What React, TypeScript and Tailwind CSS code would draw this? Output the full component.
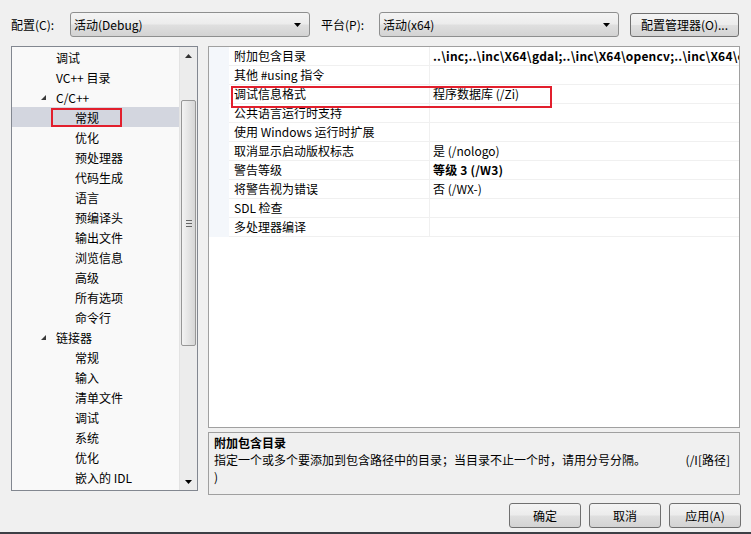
import React from "react";

const btnBg =
  "bg-[linear-gradient(to_bottom,#f4f4f4_0%,#ececec_48%,#dfdfdf_52%,#d3d3d3_100%)]";

function DownTri({ className = "" }: { className?: string }) {
  return (
    <svg width="7" height="4" viewBox="0 0 7 4" className={className}>
      <polygon points="0,0 7,0 3.5,4" fill="#000" />
    </svg>
  );
}

function Combo({ text, w }: { text: string; w: string }) {
  return (
    <div
      className={`${w} h-[25px] rounded-[3px] border border-[#8e8f8f] ${btnBg} flex items-center pl-[3px] pr-[8px] justify-between`}
    >
      <span>{text}</span>
      <DownTri />
    </div>
  );
}

type TreeItem = { t: string; lvl: 1 | 2; exp?: boolean; sel?: boolean };

const tree: TreeItem[] = [
  { t: "调试", lvl: 1 },
  { t: "VC++ 目录", lvl: 1 },
  { t: "C/C++", lvl: 1, exp: true },
  { t: "常规", lvl: 2, sel: true },
  { t: "优化", lvl: 2 },
  { t: "预处理器", lvl: 2 },
  { t: "代码生成", lvl: 2 },
  { t: "语言", lvl: 2 },
  { t: "预编译头", lvl: 2 },
  { t: "输出文件", lvl: 2 },
  { t: "浏览信息", lvl: 2 },
  { t: "高级", lvl: 2 },
  { t: "所有选项", lvl: 2 },
  { t: "命令行", lvl: 2 },
  { t: "链接器", lvl: 1, exp: true },
  { t: "常规", lvl: 2 },
  { t: "输入", lvl: 2 },
  { t: "清单文件", lvl: 2 },
  { t: "调试", lvl: 2 },
  { t: "系统", lvl: 2 },
  { t: "优化", lvl: 2 },
  { t: "嵌入的 IDL", lvl: 2 },
];

type Prop = { k: string; v?: string; bold?: boolean };
const props: Prop[] = [
  { k: "附加包含目录", v: "..\\inc;..\\inc\\X64\\gdal;..\\inc\\X64\\opencv;..\\inc\\X64\\c", bold: true },
  { k: "其他 #using 指令" },
  { k: "调试信息格式", v: "程序数据库 (/Zi)" },
  { k: "公共语言运行时支持" },
  { k: "使用 Windows 运行时扩展" },
  { k: "取消显示启动版权标志", v: "是 (/nologo)" },
  { k: "警告等级", v: "等级 3 (/W3)", bold: true },
  { k: "将警告视为错误", v: "否 (/WX-)" },
  { k: "SDL 检查" },
  { k: "多处理器编译" },
];

function Button({ text }: { text: string }) {
  return (
    <div
      className={`w-[72px] h-[25px] rounded-[3px] border border-[#707070] ${btnBg} flex items-center justify-center`}
    >
      {text}
    </div>
  );
}

export default function App() {
  return (
    <div className="w-[751px] h-[534px] bg-[#f0f0f0] overflow-hidden flex flex-col text-[12px] leading-[17px] text-[#000] font-['Noto_Sans_CJK_SC',sans-serif]">
      {/* top row */}
      <div className="flex items-center h-[25px] mt-[12px] pl-[11px]">
        <span className="w-[59px]">配置(C):</span>
        <Combo text="活动(Debug)" w="w-[240px]" />
        <span className="ml-[11px] w-[58px]">平台(P):</span>
        <Combo text="活动(x64)" w="w-[240px]" />
        <div
          className={`ml-[11px] w-[109px] h-[24px] rounded-[3px] border border-[#707070] ${btnBg} flex items-center justify-center`}
        >
          配置管理器(O)...
        </div>
      </div>

      {/* body */}
      <div className="flex mt-[9px] pl-[11px] h-[449px]">
        {/* tree */}
        <div className="w-[187px] h-[445px] border border-[#828790] bg-[#f9f9f9] flex">
          <div className="flex-1 flex flex-col pt-[-1px]">
            {tree.map((it, i) => (
              <div
                key={i}
                className={`relative h-[20px] flex items-center ${
                  it.sel ? "bg-[#d3d6df]" : ""
                } ${it.lvl === 1 ? "pl-[44px]" : "pl-[63px]"}`}
              >
                {it.exp && (
                  <svg
                    width="5"
                    height="5"
                    viewBox="0 0 5 5"
                    className="absolute left-[29px] top-[8px]"
                  >
                    <polygon points="5,0 5,5 0,5" fill="#3a3a3a" />
                  </svg>
                )}
                <span>{it.t}</span>
                {it.sel && (
                  <div className="absolute left-[39px] top-[1px] w-[71px] h-[19px] border-2 border-[#e21f2d]" />
                )}
              </div>
            ))}
          </div>
          {/* scrollbar */}
          <div className="w-[18px] flex flex-col bg-[#ececec] border-l border-[#e3e3e3]">
            <div className="h-[17px] flex items-center justify-center">
              <svg width="7" height="4" viewBox="0 0 7 4">
                <polygon points="0,4 7,4 3.5,0" fill="#333" />
              </svg>
            </div>
            <div className="flex-1 flex flex-col px-[1px]">
              <div className="mt-[36px] h-[246px] rounded-[2px] border border-[#979797] bg-[linear-gradient(to_right,#f3f3f3,#e6e6e6_45%,#d6d6d6)] flex items-center justify-center">
                <div className="flex flex-col gap-[2px]">
                  <div className="w-[6px] h-[1px] bg-[#666]" />
                  <div className="w-[6px] h-[1px] bg-[#666]" />
                  <div className="w-[6px] h-[1px] bg-[#666]" />
                </div>
              </div>
            </div>
            <div className="h-[17px] flex items-center justify-center">
              <DownTri />
            </div>
          </div>
        </div>

        {/* right side */}
        <div className="ml-[10px] w-[532px] flex flex-col">
          <div className="relative h-[383px] border border-[#a0a0a0] bg-white flex flex-col overflow-hidden">
            {props.map((p, i) => (
              <div key={i} className="flex h-[19px] w-full">
                <div className="w-[20px] shrink-0 bg-[#f4f7fb]" />
                <div className="w-[201px] shrink-0 border-r border-b border-[#f0f0f0] pl-[5px] leading-[18px] whitespace-nowrap">
                  {p.k}
                </div>
                <div
                  className={`flex-1 min-w-0 border-b border-[#f0f0f0] pl-[3px] leading-[18px] whitespace-nowrap overflow-hidden ${
                    p.bold ? "font-bold tracking-[0.2px]" : ""
                  }`}
                >
                  {p.v ?? ""}
                </div>
              </div>
            ))}
            <div className="absolute left-[22px] top-[39px] w-[321px] h-[22px] border-2 border-[#e21f2d]" />
          </div>
          <div className="mt-[4px] h-[63px] border border-[#a0a0a0] bg-[#f0f0f0] pl-[5px] pr-[9px] pt-[1px] flex flex-col">
            <div className="font-bold">附加包含目录</div>
            <div className="flex justify-between">
              <span>指定一个或多个要添加到包含路径中的目录；当目录不止一个时，请用分号分隔。</span>
              <span>(/I[路径]</span>
            </div>
            <div>)</div>
          </div>
        </div>
      </div>

      {/* buttons */}
      <div className="flex justify-end gap-[8px] pr-[10px] mt-[8px]">
        <Button text="确定" />
        <Button text="取消" />
        <Button text="应用(A)" />
      </div>
      <div className="mt-auto h-[2px] bg-[#3c3f45]" />
    </div>
  );
}
